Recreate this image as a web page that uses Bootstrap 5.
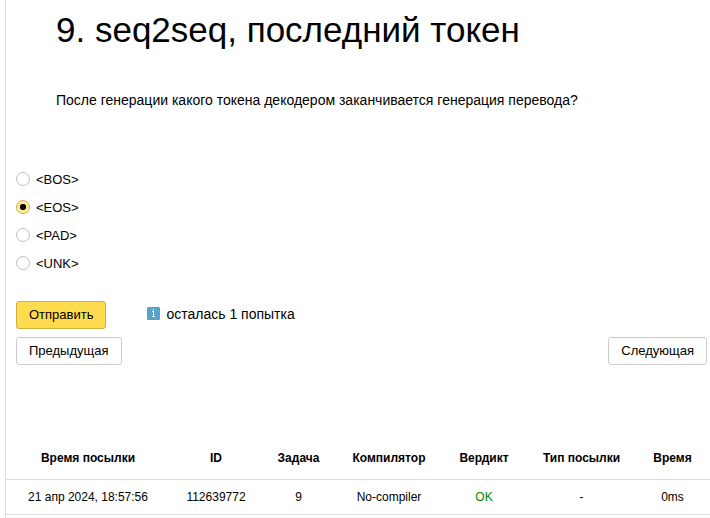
<!DOCTYPE html>
<html lang="ru">
<head>
<meta charset="utf-8">
<meta name="viewport" content="width=device-width, initial-scale=1">
<title>seq2seq</title>
<link href="https://cdn.jsdelivr.net/npm/bootstrap@5.3.0/dist/css/bootstrap.min.css" rel="stylesheet">
<style>
body{font-family:"Liberation Sans",Arial,sans-serif;font-size:13px;color:#000;line-height:28px;background:#fff;overflow:hidden}
.problem{margin-left:5px;border-left:1px solid #ddd;height:518px}
.problem-title{font-size:35px;line-height:40px;padding:10px 0 0 50px;letter-spacing:0}
.question{font-size:14px;line-height:20px;margin:40px 0 0 50px}
.answers{margin:55px 0 0 10px}
.answer{height:28px;gap:6px}
.answer span{padding-top:2px}
.answer .form-check-input{width:14px;height:14px;margin:0;border:1px solid #bfbfbf;background:#fff;box-shadow:none}
.answer .form-check-input:checked{border-color:#ccb050;background:radial-gradient(circle,#000 0 2.8px,#ffe896 3.5px)}
.btn-task{font-size:13px;line-height:26px;height:28px;padding:0 12px;border:1px solid #ccc;border-radius:3px;color:#000;background:#fff}
.btn-send{background:#ffdb4d;border-color:#ccaf3d}
.actions{margin:24px 0 0 10px;height:28px}
.attempts{font-size:14px;line-height:26px;height:28px;margin-left:41px;gap:6px}
.attempts svg{margin-top:6px}
.pager{margin:8px 3px 0 10px}
.runs{margin:75px 0 0;font-size:12px;table-layout:fixed;width:705px;line-height:18px;--bs-table-color:#000}
.runs th,.runs td{padding:8px 0;text-align:center;border-bottom:1px solid #ddd;height:35px}
.runs th{padding-bottom:12px;height:39px}
.runs th:last-child,.runs td:last-child{padding-right:4px}
.verdict{color:#080!important}
</style>
</head>
<body>
<main class="problem d-flex flex-column">
<h1 class="problem-title fw-normal m-0 text-nowrap">9. seq2seq, последний токен</h1>
<p class="question mb-0">После генерации какого токена декодером заканчивается генерация перевода?</p>
<form class="answers">
<label class="answer d-flex align-items-center"><input class="form-check-input" type="radio" name="token"><span>&lt;BOS&gt;</span></label>
<label class="answer d-flex align-items-center"><input class="form-check-input" type="radio" name="token" checked><span>&lt;EOS&gt;</span></label>
<label class="answer d-flex align-items-center"><input class="form-check-input" type="radio" name="token"><span>&lt;PAD&gt;</span></label>
<label class="answer d-flex align-items-center"><input class="form-check-input" type="radio" name="token"><span>&lt;UNK&gt;</span></label>
</form>
<div class="actions d-flex align-items-start">
<button class="btn btn-task btn-send" type="button">Отправить</button>
<div class="attempts d-flex align-items-start"><svg width="13" height="13" viewBox="0 0 13 13"><rect width="13" height="13" rx="1.2" fill="#58a3cc"/><path d="M6 2h1v1.2H6zM5 4h2v5h1v1H5V9h1V5H5z" fill="#fff"/></svg>осталась 1 попытка</div>
</div>
<div class="pager d-flex justify-content-between">
<button class="btn btn-task" type="button">Предыдущая</button>
<button class="btn btn-task" type="button">Следующая</button>
</div>
<table class="table runs">
<colgroup><col style="width:164px"><col style="width:92px"><col style="width:73px"><col style="width:108px"><col style="width:82px"><col style="width:113px"><col style="width:73px"></colgroup>
<thead><tr><th>Время посылки</th><th>ID</th><th>Задача</th><th>Компилятор</th><th>Вердикт</th><th>Тип посылки</th><th>Время</th></tr></thead>
<tbody><tr><td>21 апр 2024, 18:57:56</td><td>112639772</td><td>9</td><td>No-compiler</td><td class="verdict">OK</td><td>-</td><td>0ms</td></tr></tbody>
</table>
</main>
<script src="https://cdn.jsdelivr.net/npm/bootstrap@5.3.0/dist/js/bootstrap.bundle.min.js"></script>
</body>
</html>
